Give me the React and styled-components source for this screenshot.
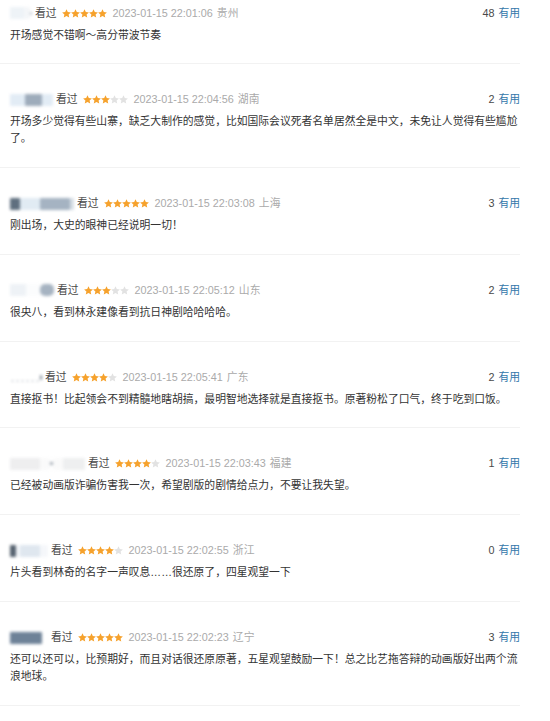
import React from "react";
import styled, { createGlobalStyle } from "styled-components";

const Global = createGlobalStyle`
  html, body { margin: 0; padding: 0; background: #fff; }
  body { font-family: "Liberation Sans", "Noto Sans CJK SC", sans-serif; }
`;

const List = styled.div`
  width: 520px;
`;

const Item = styled.div`
  padding: 27px 0 19.8px 10px;
  border-bottom: 1px solid #f2f2f2;
  &:first-child { padding-top: 4.5px; }
`;

const Header = styled.div`
  display: flex;
  align-items: center;
  height: 17px;
  font-size: 10.8px;
  line-height: 17px;
  white-space: nowrap;
`;

const Name = styled.span`
  display: flex;
  align-items: center;
  height: 14px;
  margin-right: 3px;
  filter: blur(1.4px);
`;

const Seg = styled.span`
  display: inline-block;
  width: ${(p) => p.$w}px;
  height: ${(p) => p.$h || 12}px;
  background: ${(p) => p.$c};
  border-radius: ${(p) => p.$r || 1}px;
`;

const Watched = styled.span`
  color: #494949;
  margin-right: 5px;
`;

const Stars = styled.span`
  display: inline-flex;
  align-items: center;
  margin-right: 6px;
`;

const Time = styled.span`
  color: #aaa;
`;

const Place = styled.span`
  color: #aaa;
  margin-left: 4px;
`;

const Votes = styled.span`
  margin-left: auto;
  color: #494949;
`;

const Useful = styled.span`
  color: #3377aa;
  margin-left: 4px;
`;

const Content = styled.p`
  margin: 5px 0 0;
  font-size: 10.8px;
  line-height: 17px;
  color: #333;
  width: 510px;
`;

const Star = ({ on }) => (
  <svg width="9" height="9" viewBox="1 1 22 21">
    <path
      d="M12 1.2l3.2 6.9 7.5.8-5.6 5.1 1.6 7.5L12 17.7l-6.7 3.8 1.6-7.5-5.6-5.1 7.5-.8z"
      fill={on ? "#f6a22d" : "#e2e2e2"}
    />
  </svg>
);

const data = [
  {
    name: [{ w: 14, c: "#eef3f7" }, { w: 6, c: "#f4f6f8" }, { w: 2, c: "#b9c2cc", h: 3 }],
    stars: 5,
    time: "2023-01-15 22:01:06",
    place: "贵州",
    votes: 48,
    text: "开场感觉不错啊～高分带波节奏",
  },
  {
    name: [{ w: 15, c: "#e2ecf5" }, { w: 17, c: "#9eacbb" }, { w: 11, c: "#e2ecf5" }],
    stars: 3,
    time: "2023-01-15 22:04:56",
    place: "湖南",
    votes: 2,
    text: "开场多少觉得有些山寨，缺乏大制作的感觉，比如国际会议死者名单居然全是中文，未免让人觉得有些尴尬了。",
  },
  {
    name: [{ w: 10, c: "#5f6f7f" }, { w: 20, c: "#e1ebf3" }, { w: 30, c: "#a5b3c2" }, { w: 4, c: "#d5dde5" }],
    stars: 5,
    time: "2023-01-15 22:03:08",
    place: "上海",
    votes: 3,
    text: "刚出场，大史的眼神已经说明一切！",
  },
  {
    name: [{ w: 16, c: "#eef2f6" }, { w: 14, c: "#fbfcfd" }, { w: 14, c: "#a6b3c1", r: 5 }],
    stars: 3,
    time: "2023-01-15 22:05:12",
    place: "山东",
    votes: 2,
    text: "很央八，看到林永建像看到抗日神剧哈哈哈哈。",
  },
  {
    dots: true,
    stars: 4,
    time: "2023-01-15 22:05:41",
    place: "广东",
    votes: 2,
    text: "直接抠书！比起领会不到精髓地瞎胡搞，最明智地选择就是直接抠书。原著粉松了口气，终于吃到口饭。",
  },
  {
    name: [{ w: 30, c: "#eeeeef" }, { w: 10, c: "#fafafa" }, { w: 3, c: "#9aa3ad", h: 3 }, { w: 10, c: "#fafafa" }, { w: 22, c: "#eeeff0" }],
    stars: 4,
    time: "2023-01-15 22:03:43",
    place: "福建",
    votes: 1,
    text: "已经被动画版诈骗伤害我一次，希望剧版的剧情给点力，不要让我失望。",
  },
  {
    name: [{ w: 6, c: "#56626f" }, { w: 4, c: "#f4f7fa" }, { w: 20, c: "#dfe7ef" }, { w: 8, c: "#f5f7fa" }],
    stars: 4,
    time: "2023-01-15 22:02:55",
    place: "浙江",
    votes: 0,
    text: "片头看到林奇的名字一声叹息……很还原了，四星观望一下",
  },
  {
    name: [{ w: 32, c: "#6e8298" }, { w: 6, c: "#fff" }],
    stars: 5,
    time: "2023-01-15 22:02:23",
    place: "辽宁",
    votes: 3,
    text: "还可以还可以，比预期好，而且对话很还原原著，五星观望鼓励一下！总之比艺拖答辩的动画版好出两个流浪地球。",
  },
];

const Dots = styled.span`
  display: inline-block;
  width: 30px;
  height: 2px;
  background-image: radial-gradient(circle, #a9b2bc 0.8px, transparent 1px);
  background-size: 5px 2px;
  margin-top: 8px;
`;

export default function App() {
  return (
    <>
      <Global />
      <List>
        {data.map((d, i) => (
          <Item key={i}>
            <Header>
              <Name>
                {d.dots ? (
                  <>
                    <Dots />
                    <Seg $w={2} $h={5} $c="#7f8a96" />
                  </>
                ) : (
                  d.name.map((s, j) => <Seg key={j} $w={s.w} $h={s.h} $c={s.c} $r={s.r} />)
                )}
              </Name>
              <Watched>看过</Watched>
              <Stars>
                {[0, 1, 2, 3, 4].map((k) => (
                  <Star key={k} on={k < d.stars} />
                ))}
              </Stars>
              <Time>{d.time}</Time>
              <Place>{d.place}</Place>
              <Votes>
                {d.votes}
                <Useful>有用</Useful>
              </Votes>
            </Header>
            <Content>{d.text}</Content>
          </Item>
        ))}
      </List>
    </>
  );
}
